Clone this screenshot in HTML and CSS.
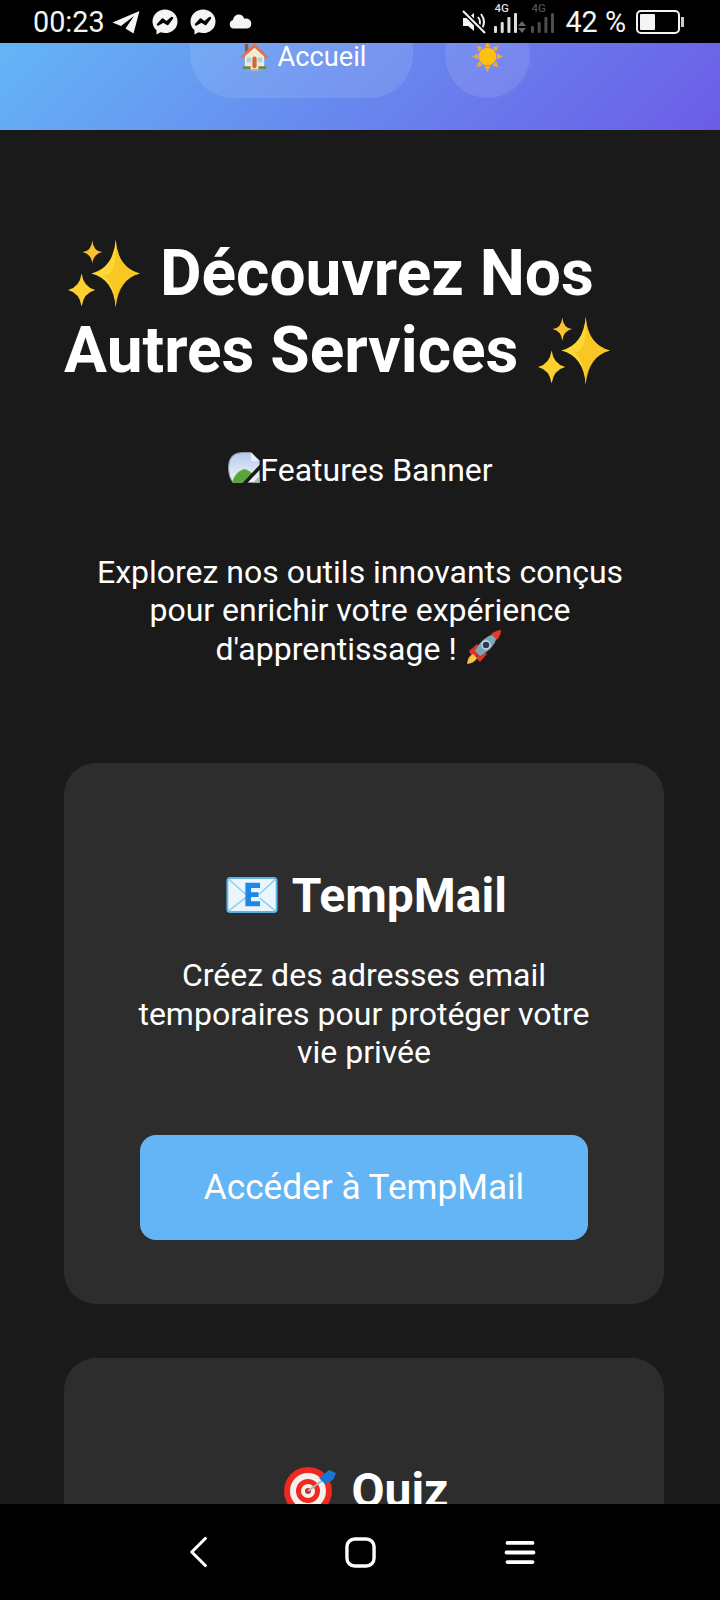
FILE: index.html
```html
<!DOCTYPE html>
<html lang="fr">
<head>
    <meta charset="UTF-8">
    <meta name="viewport" content="width=device-width, initial-scale=1.0">
    <title>Découvrez Nos Autres Services</title>
    <link rel="stylesheet" href="styles.css">
</head>
<body>
    <svg class="defs" width="0" height="0">
        <defs>
            <linearGradient id="sky" x1="0" y1="0" x2="0" y2="1">
                <stop offset="0" stop-color="#b4c9ee"/>
                <stop offset="1" stop-color="#f2f5fa"/>
            </linearGradient>
            <symbol id="sparkles" viewBox="0 0 74 70">
                <path fill="#fdd835" d="M49 0Q51 29 74 35Q51 41 49 70Q47 41 24 35Q47 29 49 0Z"/>
                <path fill="#f5b50f" d="M49 70Q47 41 36 37Q51 38 49 0Q51 29 74 35Q53 40 49 70Z" opacity=".5"/>
                <path fill="#fbc02d" d="M25 1Q26 12 35 13Q26 15 25 25Q24 15 15 13Q24 12 25 1Z"/>
                <path fill="#fdd02f" d="M14 35Q16 49 28 52Q16 55 14 69Q12 55 0 52Q12 49 14 35Z"/>
            </symbol>
            <symbol id="messenger" viewBox="0 0 26 26">
                <path fill="#f4f4f4" d="M13 0.5C6 0.5 .5 5.600 .5 12.400C.5 16 2 19.100 4.500 21.200V25.500L8.600 23.300C10 23.800 11.500 24.100 13 24.100C20 24.100 25.500 19.100 25.500 12.400C25.500 5.600 20 0.500 13 0.500Z"/>
                <path fill="none" stroke="#000" stroke-width="2.400" stroke-linejoin="round" d="M6 15.500L10.500 10.500L14.500 13.500L20 9L15.500 15L11.500 12.500Z"/>
            </symbol>
            <symbol id="signal" viewBox="0 0 23 20">
                <g fill="currentColor">
                    <rect x="0" y="13" width="3" height="7" rx="1"/>
                    <rect x="6.700" y="9" width="3" height="11" rx="1"/>
                    <rect x="13.400" y="4" width="3" height="16" rx="1"/>
                    <rect x="20" y="0" width="3" height="20" rx="1"/>
                </g>
            </symbol>
        </defs>
    </svg>

    <div class="status-bar">
        <div class="status-left">
            <span class="clock">00:23</span>
            <svg class="ic-telegram" viewBox="0 0 28 24"><path fill="#f4f4f4" d="M.5 12.500L27.500 1L21.500 23.500L13.500 18.500L22 6L9 16Z"/></svg>
            <svg class="ic-msg"><use href="#messenger"/></svg>
            <svg class="ic-msg"><use href="#messenger"/></svg>
            <svg class="ic-cloud" viewBox="0 0 24 16"><path fill="#f4f4f4" d="M5 15.500C2 15.500 .5 13.500 .5 11C.5 8.500 2 7 4 6.500C4.500 3 7 .5 10 .5C13 .5 15 2 16 5C20 4.500 23.500 6.500 23.500 10.500C23.500 13.500 21.500 15.500 19 15.500Z"/></svg>
        </div>
        <div class="status-right">
            <svg class="ic-mute" viewBox="0 0 24 24">
                <path fill="#f4f4f4" d="M1 8H6L12 3V21L6 16H1Z"/>
                <path fill="none" stroke="#f4f4f4" stroke-width="2" d="M16 7Q20 12 16 17M19 4Q25 12 19 20"/>
                <path stroke="#000" stroke-width="5" d="M1 1L23 23"/>
                <path stroke="#f4f4f4" stroke-width="2.200" d="M1 1L23 23"/>
            </svg>
            <div class="sim">
                <span class="sim-label">4G</span>
                <div class="sim-bars">
                    <svg class="ic-signal"><use href="#signal"/></svg>
                    <svg class="ic-arrows" viewBox="0 0 8 12"><path fill="#666" d="M4 0L8 5H0ZM4 12L0 7H8Z"/></svg>
                </div>
            </div>
            <div class="sim sim-off">
                <span class="sim-label">4G</span>
                <div class="sim-bars">
                    <svg class="ic-signal"><use href="#signal"/></svg>
                </div>
            </div>
            <span class="battery-pct">42 %</span>
            <div class="battery"><div class="battery-fill"></div></div>
            <div class="battery-cap"></div>
        </div>
    </div>

    <div class="screen">
        <header class="top-nav">
            <a class="nav-btn">
                <svg class="ic-house" viewBox="0 0 30 30">
                    <rect x="5" y="1" width="3.500" height="8" fill="#8d5a4a"/>
                    <rect x="5" y="12" width="20" height="15" fill="#f3ead8"/>
                    <path fill="#dd7446" d="M15 .5L29.500 14.500L27 16L15 5L3 16L.5 14.500Z"/>
                    <path fill="#f3ead8" d="M15 5L25 14H5Z"/>
                    <rect x="7" y="15" width="4.500" height="5" fill="#a9d6dd"/>
                    <rect x="18.500" y="15" width="4.500" height="5" fill="#a9d6dd"/>
                    <rect x="12.800" y="14" width="4.400" height="12" rx="2" fill="#cf6a3c"/>
                    <rect x="3" y="24" width="8" height="3" fill="#6f8a3c"/>
                    <rect x="19" y="24" width="8" height="3" fill="#6f8a3c"/>
                    <rect x="11" y="27" width="8" height="2" fill="#b9b4ac"/>
                </svg>
                <span>Accueil</span>
            </a>
            <a class="theme-btn">
                <svg class="ic-sun" viewBox="0 0 30 30">
                    <path fill="#f2a63b" d="M15 0L18 6H12ZM15 30L12 24H18ZM0 15L6 12V18ZM30 15L24 18V12ZM4.400 4.400L10.500 6.500L6.500 10.500ZM25.600 25.600L19.500 23.500L23.500 19.500ZM25.600 4.400L23.500 10.500L19.500 6.500ZM4.400 25.600L6.500 19.500L10.500 23.500Z"/>
                    <circle cx="15" cy="15" r="8.500" fill="#fdc010"/>
                </svg>
            </a>
        </header>

        <main class="content">
            <h1 class="page-title">
                <svg class="ic-sparkles"><use href="#sparkles"/></svg> Découvrez Nos Autres Services <svg class="ic-sparkles"><use href="#sparkles"/></svg>
            </h1>

            <div class="banner">
                <svg class="ic-broken" viewBox="0 0 32 31">
                    <path fill="url(#sky)" stroke="#8b8f96" stroke-width="1" d="M.5 15Q.5 1 14 .5H23L31.500 9V30.500H5Q.5 25 .5 15Z"/>
                    <path fill="#eceef1" d="M23 .5L31.500 9H23Z"/>
                    <path fill="#57a838" d="M4 30.500Q7 20 16 17Q21 18 26 23L19 30.500Z"/>
                    <path fill="#a8c49a" d="M25 30.500L31.500 24V30.500Z"/>
                    <path stroke="#1a1a1a" stroke-width="3.500" d="M33 14L16 32"/>
                </svg><span>Features Banner</span>
            </div>

            <p class="intro">Explorez nos outils innovants conçus pour enrichir votre expérience d'apprentissage ! <svg class="ic-rocket" viewBox="0 0 38 38">
                <path fill="#d9352c" d="M5 22L13 15L17 21L10 31Z"/>
                <path fill="#d9352c" d="M16 33L23 25L17 21L12 29Z"/>
                <path fill="#f5c243" d="M3 35Q4 27 9 25L13 29Q11 34 3 35Z"/>
                <path fill="#7fa6b8" d="M11 22Q18 8 30 5L33 8Q30 20 16 27Z"/>
                <path fill="#e4392b" d="M27 5Q33 1 37 1Q37 6 33 11Z"/>
                <circle cx="22" cy="16" r="4" fill="#243f4d" stroke="#d0dce2" stroke-width="1.500"/>
            </svg></p>

            <section class="card">
                <h2 class="card-title">
                    <svg class="ic-mail" viewBox="0 0 54 38">
                        <rect x="1" y="1" width="52" height="36" rx="3" fill="#eaf6fd" stroke="#5cb3e6" stroke-width="2"/>
                        <path fill="none" stroke="#8fcdf0" stroke-width="1.500" d="M2 2L20 18M52 2L35 18M2 36L20 22M52 36L35 22"/>
                        <path fill="#1e88e5" d="M20 6H35.500V11.500H26V16H34V21H26V25.500H35.500V31H20Z"/>
                    </svg>
                    TempMail
                </h2>
                <p class="card-text">Créez des adresses email temporaires pour protéger votre vie privée</p>
                <a class="card-btn">Accéder à TempMail</a>
            </section>

            <section class="card">
                <h2 class="card-title">
                    <svg class="ic-target" viewBox="0 0 54 54">
                        <circle cx="25" cy="29" r="24" fill="#f0291f"/>
                        <circle cx="25" cy="29" r="18" fill="#f4f0ee"/>
                        <circle cx="25" cy="29" r="12" fill="#f0291f"/>
                        <circle cx="25" cy="29" r="7" fill="#f4f0ee"/>
                        <circle cx="25" cy="29" r="3" fill="#c9302c"/>
                        <path stroke="#a9b4b8" stroke-width="2" d="M25 29L40 18"/>
                        <path fill="#1976d2" d="M36 16L46 8L53 11L50 18L42 22Z"/>
                    </svg>
                    Quiz
                </h2>
            </section>
        </main>
    </div>

    <nav class="nav-bar">
        <svg class="ic-back" viewBox="0 0 20 34"><path fill="none" stroke="#fff" stroke-width="3.500" stroke-linecap="round" stroke-linejoin="round" d="M17 2L2 17L17 32"/></svg>
        <svg class="ic-home" viewBox="0 0 32 32"><rect x="2" y="2" width="28" height="28" rx="8" fill="none" stroke="#fff" stroke-width="3.500"/></svg>
        <svg class="ic-menu" viewBox="0 0 32 26"><path stroke="#fff" stroke-width="4" stroke-linecap="round" d="M3 3H29M2 13H30M3 23H29"/></svg>
    </nav>
</body>
</html>
```

FILE: styles.css
```css
* {
    box-sizing: border-box;
}

body {
    margin: 0;
    height: 1600px;
    width: 720px;
    display: flex;
    flex-direction: column;
    overflow: hidden;
    background: #000;
    color: #fff;
    font-family: Roboto, sans-serif;
}

.defs {
    display: block;
    height: 0;
}

/* barre de statut */
.status-bar {
    flex: 0 0 43px;
    display: flex;
    justify-content: space-between;
    padding: 0 36px 0 33px;
    background: #000;
    color: #f4f4f4;
}

.status-left,
.status-right {
    display: flex;
    align-items: center;
}

.clock {
    font-size: 28.8px;
    margin-right: 7px;
}

.ic-telegram {
    width: 28px;
    height: 24px;
    margin-right: 12px;
}

.ic-msg {
    width: 26px;
    height: 26px;
    margin-right: 12px;
}

.ic-cloud {
    width: 23px;
    height: 15px;
    margin-left: 1px;
}

.ic-mute {
    width: 24px;
    height: 24px;
    margin-right: 8px;
}

.sim {
    width: 37px;
    height: 30px;
    margin-top: 3px;
    align-self: flex-start;
    display: flex;
    flex-direction: column;
    color: #ddd;
}

.sim-off {
    color: #4d4d4d;
    width: 34px;
}

.sim-label {
    font-size: 11.5px;
    font-weight: 500;
    line-height: 10px;
}

.sim-bars {
    display: flex;
    align-items: flex-end;
    height: 20px;
    gap: 1px;
}

.ic-signal {
    width: 23px;
    height: 20px;
}

.ic-arrows {
    width: 8px;
    height: 12px;
}

.battery-pct {
    font-size: 28.8px;
    margin-right: 10px;
}

.battery {
    width: 44px;
    height: 24px;
    border: 2px solid #f4f4f4;
    border-radius: 5px;
    padding: 2px;
}

.battery-fill {
    width: 15px;
    height: 100%;
    background: #f4f4f4;
    border-radius: 1px;
}

.battery-cap {
    width: 3px;
    height: 10px;
    background: #ccc;
    margin-left: 1px;
}

/* page */
.screen {
    flex: 1;
    min-height: 0;
    overflow: hidden;
    background: #1a1a1a;
}

.top-nav {
    height: 87px;
    display: flex;
    justify-content: center;
    align-items: flex-end;
    gap: 32px;
    padding-bottom: 32px;
    overflow: hidden;
    background: linear-gradient(135deg, #64b5f6, #6c5ce7);
}

.nav-btn {
    flex: 0 0 223px;
    height: 55px;
    padding: 0 0 27px 3px;
    display: flex;
    justify-content: center;
    align-items: center;
    gap: 9px;
    border-radius: 0 0 43px 43px;
    background: rgba(255, 255, 255, 0.1);
    font-size: 27.2px;
    line-height: 28px;
}

.theme-btn {
    flex: 0 0 85px;
    height: 85px;
    padding-top: 2px;
    display: flex;
    justify-content: center;
    align-items: center;
    border-radius: 50%;
    background: rgba(255, 255, 255, 0.1);
}

.ic-house {
    width: 29px;
    height: 29px;
}

.ic-sun {
    width: 31px;
    height: 31px;
}

.content {
    padding: 106px 56px 0 64px;
}

.page-title {
    margin: 0 0 61px;
    font-size: 64px;
    font-weight: 700;
    line-height: 1.2;
}

.ic-sparkles {
    width: 72px;
    height: 69px;
    margin: 0 4px;
    vertical-align: -13px;
}

.banner {
    display: flex;
    justify-content: center;
    align-items: center;
    height: 38px;
    margin: 0 8px 64px 0;
    font-size: 32px;
}

.ic-broken {
    width: 32px;
    height: 31px;
    margin: 0 0 4px 1px;
}

.intro {
    margin: 0 8px 94px 0;
    font-size: 32px;
    line-height: 1.2;
    text-align: center;
}

.ic-rocket {
    width: 38px;
    height: 38px;
    margin: 0 3px 0 -1px;
    vertical-align: -7px;
}

.card {
    height: 541px;
    margin-bottom: 54px;
    padding: 104px 72px 0;
    border-radius: 32px;
    background: #2d2d2d;
    text-align: center;
}

.card-title {
    margin: 0 0 32px;
    font-size: 48px;
    font-weight: 700;
    line-height: 1.2;
}

.ic-mail {
    width: 52px;
    height: 36px;
    margin: 0 3px 0 5px;
    vertical-align: -1px;
}

.ic-target {
    width: 54px;
    height: 54px;
    margin: 0 2px 0 4px;
    vertical-align: -9px;
}

.card-text {
    margin: 0 0 63px;
    font-size: 32px;
    line-height: 1.2;
}

.card-btn {
    display: block;
    height: 105px;
    margin: 0 4px;
    line-height: 105px;
    border-radius: 16px;
    background: #64b5f6;
    font-size: 35.2px;
}

/* barre de navigation */
.nav-bar {
    flex: 0 0 96px;
    display: flex;
    align-items: center;
    background: #000;
    padding-left: 190px;
}

.ic-back {
    width: 18px;
    height: 32px;
    margin-right: 137px;
}

.ic-home {
    width: 31px;
    height: 31px;
    margin-right: 128px;
}

.ic-menu {
    width: 32px;
    height: 25px;
}
```
